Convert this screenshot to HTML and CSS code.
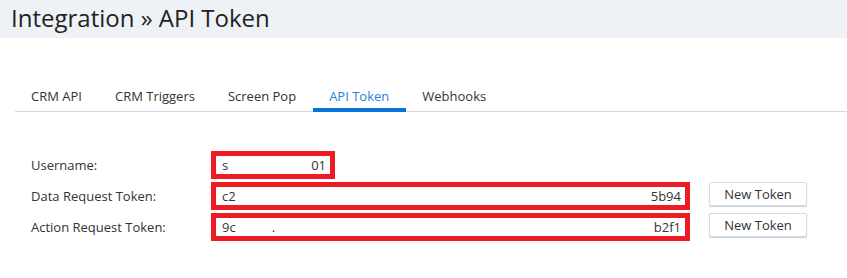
FILE: index.html
```html
<!DOCTYPE html>
<html lang="en">
<head>
    <meta charset="UTF-8">
    <title>Integration » API Token</title>
    <link rel="stylesheet" href="styles.css">
</head>
<body>
    <header class="page-header">
        <h1>Integration » API Token</h1>
    </header>

    <nav class="tabs">
        <a class="tab">CRM API</a>
        <a class="tab">CRM Triggers</a>
        <a class="tab">Screen Pop</a>
        <a class="tab active">API Token</a>
        <a class="tab">Webhooks</a>
    </nav>

    <main class="token-form">
        <div class="row">
            <label class="label">Username:</label>
            <div class="field field-short"><span>s</span><span class="tail">01</span></div>
        </div>
        <div class="row">
            <label class="label">Data Request Token:</label>
            <div class="field"><span>c2</span><span class="tail">5b94</span></div>
            <button class="btn">New Token</button>
        </div>
        <div class="row">
            <label class="label">Action Request Token:</label>
            <div class="field"><span>9c</span><span class="dot">.</span><span class="tail">b2f1</span></div>
            <button class="btn">New Token</button>
        </div>
    </main>
</body>
</html>
```

FILE: styles.css
```css
body {
    font-family: "Open Sans", sans-serif;
    color: #333;
    margin: 0;
    padding: 0;
    background-color: #fff;
}
.page-header {
    background-color: #eef2f7;
    height: 38px;
    padding: 0 11px;
}
.page-header h1 {
    margin: 0;
    font-size: 24px;
    font-weight: 400;
    line-height: 36px;
    color: #222;
}
.tabs {
    display: flex;
    margin: 46px 0 0 15px;
    border-bottom: 1px solid #d5dbe3;
}
.tab {
    display: block;
    padding: 3px 17px 3px 16px;
    font-size: 13px;
    line-height: 18px;
    color: #333;
    border-bottom: 4px solid transparent;
    margin-bottom: -1px;
    cursor: pointer;
}
.tab.active {
    color: #2a7fd8;
    border-bottom-color: #0a74da;
}
.token-form {
    display: flex;
    flex-direction: column;
    gap: 3px;
    padding: 39px 0 0 31px;
}
.row {
    display: flex;
    align-items: flex-start;
    height: 28px;
}
.label {
    width: 180px;
    font-size: 13px;
    line-height: 28px;
}
.field {
    display: flex;
    box-sizing: border-box;
    width: 479px;
    height: 28px;
    border: 5px solid #ed1c24;
    padding: 0 4px 0 6px;
    font-size: 13px;
    line-height: 18px;
    color: #333;
}
.field-short {
    width: 124px;
}
.tail {
    margin-left: auto;
}
.dot {
    margin-left: 36px;
}
.btn {
    box-sizing: border-box;
    width: 98px;
    height: 24px;
    margin-left: 19px;
    padding: 0;
    font-family: inherit;
    font-size: 13px;
    color: #333;
    background-color: #fff;
    border: 1px solid #d6dce5;
    border-radius: 2px;
    box-shadow: 0 1px 1px #c5ccd8;
    cursor: pointer;
}
```
